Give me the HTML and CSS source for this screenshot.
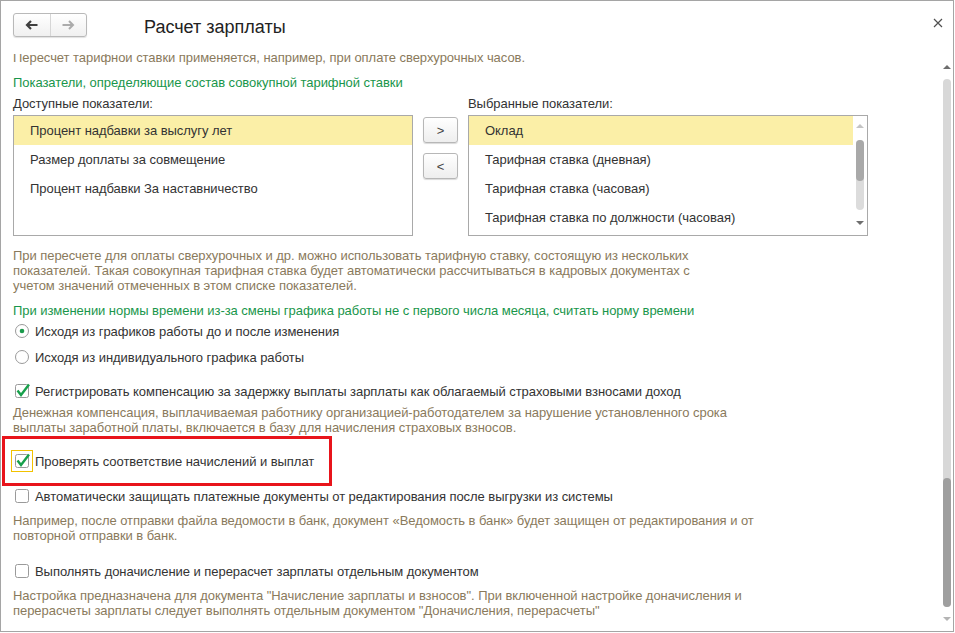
FILE: index.html
```html
<!DOCTYPE html>
<html lang="ru">

<head>
    <meta charset="UTF-8">
    <title>Расчет зарплаты</title>
    <link rel="stylesheet" href="styles.css">
</head>

<body>
    <div class="window">
        <div class="header">
            <div class="nav">
                <span class="nav-btn">
                    <svg width="13" height="10" viewBox="0 0 13 10"><path d="M12.5 5H2M6 1L2 5l4 4" fill="none" stroke="#404040" stroke-width="2.2"/></svg>
                </span>
                <span class="nav-btn">
                    <svg width="13" height="10" viewBox="0 0 13 10"><path d="M0.5 5H11M7 1l4 4-4 4" fill="none" stroke="#ababab" stroke-width="2"/></svg>
                </span>
            </div>
            <h1 class="title">Расчет зарплаты</h1>
            <span class="close">
                <svg width="10" height="10" viewBox="0 0 10 10"><path d="M1 1l8 8M9 1L1 9" stroke="#505050" stroke-width="1.2"/></svg>
            </span>
        </div>

        <div class="body">
            <div class="content">
                <div class="scroll-inner">
                    <div class="hint">Пересчет тарифной ставки применяется, например, при оплате сверхурочных часов.</div>

                    <div class="section-title first">Показатели, определяющие состав совокупной тарифной ставки</div>

                    <div class="lists">
                        <div class="list-label">Доступные показатели:</div>
                        <div></div>
                        <div class="list-label">Выбранные показатели:</div>

                        <div class="list">
                            <div class="list-rows">
                                <div class="list-row current">Процент надбавки за выслугу лет</div>
                                <div class="list-row">Размер доплаты за совмещение</div>
                                <div class="list-row">Процент надбавки За наставничество</div>
                            </div>
                        </div>

                        <div class="move-buttons">
                            <div class="move-btn">&gt;</div>
                            <div class="move-btn">&lt;</div>
                        </div>

                        <div class="list">
                            <div class="list-rows">
                                <div class="list-row current">Оклад</div>
                                <div class="list-row">Тарифная ставка (дневная)</div>
                                <div class="list-row">Тарифная ставка (часовая)</div>
                                <div class="list-row">Тарифная ставка по должности (часовая)</div>
                            </div>
                            <div class="list-scroll">
                                <span class="arrow-up light"></span>
                                <div class="list-track"><div class="list-thumb"></div></div>
                                <span class="arrow-down"></span>
                            </div>
                        </div>
                    </div>

                    <div class="hint after-lists">При пересчете для оплаты сверхурочных и др. можно использовать тарифную ставку, состоящую из нескольких<br>показателей. Такая совокупная тарифная ставка будет автоматически рассчитываться в кадровых документах с<br>учетом значений отмеченных в этом списке показателей.</div>

                    <div class="section-title">При изменении нормы времени из-за смены графика работы не с первого числа месяца, считать норму времени</div>

                    <div class="option radio">
                        <span class="mark">
                            <svg width="16" height="16" viewBox="0 0 16 16"><circle cx="8" cy="8" r="6.5" fill="#fff" stroke="#9a9a9a"/><circle cx="8" cy="8" r="2.3" fill="#1a9a4b"/></svg>
                        </span>
                        <span>Исходя из графиков работы до и после изменения</span>
                    </div>
                    <div class="option radio">
                        <span class="mark">
                            <svg width="16" height="16" viewBox="0 0 16 16"><circle cx="8" cy="8" r="6.5" fill="#fff" stroke="#9a9a9a"/></svg>
                        </span>
                        <span>Исходя из индивидуального графика работы</span>
                    </div>

                    <div class="option opt-compensation">
                        <span class="mark">
                            <svg width="16" height="16" viewBox="0 0 16 16" overflow="visible"><rect x="1.5" y="1.5" width="13" height="13" rx="2" fill="#fff" stroke="#9a9a9a"/><path d="M3.5 7.5L7 12l8-10.5" fill="none" stroke="#17a04b" stroke-width="2.4"/></svg>
                        </span>
                        <span>Регистрировать компенсацию за задержку выплаты зарплаты как облагаемый страховыми взносами доход</span>
                    </div>
                    <div class="hint after-option">Денежная компенсация, выплачиваемая работнику организацией-работодателем за нарушение установленного срока<br>выплаты заработной платы, включается в базу для начисления страховых взносов.</div>

                    <div class="option opt-check">
                        <span class="mark focused">
                            <svg width="16" height="16" viewBox="0 0 16 16" overflow="visible"><rect x="1.5" y="1.5" width="13" height="13" rx="2" fill="#fff" stroke="#9a9a9a"/><path d="M3.5 7.5L7 12l8-10.5" fill="none" stroke="#17a04b" stroke-width="2.4"/></svg>
                        </span>
                        <span>Проверять соответствие начислений и выплат</span>
                        <span class="annotation"></span>
                    </div>

                    <div class="option opt-protect">
                        <span class="mark">
                            <svg width="16" height="16" viewBox="0 0 16 16"><rect x="1.5" y="1.5" width="13" height="13" rx="2" fill="#fff" stroke="#9a9a9a"/></svg>
                        </span>
                        <span>Автоматически защищать платежные документы от редактирования после выгрузки из системы</span>
                    </div>
                    <div class="hint after-option-wide">Например, после отправки файла ведомости в банк, документ «Ведомость в банк» будет защищен от редактирования и от<br>повторной отправки в банк.</div>

                    <div class="option opt-recalc">
                        <span class="mark">
                            <svg width="16" height="16" viewBox="0 0 16 16"><rect x="1.5" y="1.5" width="13" height="13" rx="2" fill="#fff" stroke="#9a9a9a"/></svg>
                        </span>
                        <span>Выполнять доначисление и перерасчет зарплаты отдельным документом</span>
                    </div>
                    <div class="hint after-option-wide">Настройка предназначена для документа "Начисление зарплаты и взносов". При включенной настройке доначисления и<br>перерасчеты зарплаты следует выполнять отдельным документом "Доначисления, перерасчеты"</div>
                </div>
            </div>

            <div class="vscroll">
                <div class="vscroll-btn"><span class="arrow-up"></span></div>
                <div class="vscroll-track"><div class="vscroll-thumb"></div></div>
                <div class="vscroll-btn"><span class="arrow-down light"></span></div>
            </div>
        </div>
    </div>
</body>

</html>
```

FILE: styles.css
```css
body {
    margin: 0;
    font-family: "Liberation Sans", Arial, sans-serif;
    font-size: 13px;
    letter-spacing: -0.05px;
    color: #333;
    background: #fff;
}

.window {
    width: 954px;
    height: 632px;
    box-sizing: border-box;
    border: 1px solid #a5a5a5;
    display: flex;
    flex-direction: column;
    overflow: hidden;
}

/* header */

.header {
    height: 53px;
    flex: none;
    box-sizing: border-box;
    display: flex;
    align-items: flex-start;
    padding: 12px 10px 0 12px;
}

.nav {
    display: flex;
    width: 74px;
    height: 24px;
    box-sizing: border-box;
    border: 1px solid #b9b9b9;
    border-radius: 3px;
    background: linear-gradient(#fff, #f0f0f0);
    box-shadow: 0 1px 1px rgba(0, 0, 0, 0.12);
}

.nav-btn {
    width: 36px;
    display: flex;
    align-items: center;
    justify-content: center;
}

.nav-btn + .nav-btn {
    border-left: 1px solid #d6d6d6;
}

.title {
    margin: 3px 0 0 57px;
    font-size: 18px;
    font-weight: normal;
    line-height: 23px;
    letter-spacing: 0;
    color: #222;
}

.close {
    margin: 5px 0 0 auto;
    display: flex;
}

/* body */

.body {
    flex: 1;
    min-height: 0;
    display: flex;
}

.content {
    flex: 1;
    overflow: hidden;
    padding-left: 12px;
}

.scroll-inner {
    margin-top: -4px;
    white-space: nowrap;
}

.hint {
    line-height: 15px;
    color: #8a7a5c;
}

.section-title {
    margin-top: 10px;
    line-height: 15px;
    color: #19964b;
}

.hint.after-lists {
    margin-top: 12px;
}

.hint.after-option {
    margin-top: 3px;
}

.hint.after-option-wide {
    margin-top: 6px;
}

/* lists */

.lists {
    margin-top: 6px;
    display: grid;
    grid-template-columns: 400px 35px 400px;
    column-gap: 10px;
    row-gap: 4px;
}

.list-label {
    line-height: 15px;
}

.list {
    height: 121px;
    box-sizing: border-box;
    border: 1px solid #a9a9a9;
    display: flex;
    overflow: hidden;
}

.list-rows {
    flex: 1;
}

.list-row {
    height: 29px;
    line-height: 29px;
    padding-left: 16px;
}

.list-row.current {
    background: #fbefa7;
}

.list-scroll {
    width: 14px;
    flex: none;
    display: flex;
    flex-direction: column;
    align-items: center;
    padding-top: 8px;
    box-sizing: border-box;
}

.list-track {
    margin-top: 12px;
    width: 8px;
    height: 70px;
    border-radius: 4px;
    background: #dcdcdc;
}

.list-thumb {
    height: 41px;
    border-radius: 4px;
    background: #a9a9a9;
}

.list-scroll .arrow-down {
    margin-top: 11px;
}

.arrow-up,
.arrow-down {
    width: 0;
    height: 0;
    border-left: 4px solid transparent;
    border-right: 4px solid transparent;
}

.arrow-up {
    border-bottom: 4px solid #6e6e6e;
}

.arrow-down {
    border-top: 4px solid #6e6e6e;
}

.arrow-up.light {
    border-bottom-color: #c4c4c4;
}

.arrow-down.light {
    border-top-color: #b4b4b4;
}

.move-buttons {
    display: flex;
    flex-direction: column;
    gap: 10px;
    padding-top: 2px;
}

.move-btn {
    height: 26px;
    box-sizing: border-box;
    border: 1px solid #b7b7b7;
    border-radius: 3px;
    background: linear-gradient(#fff, #eeeeee);
    box-shadow: 0 1px 1px rgba(0, 0, 0, 0.15);
    display: flex;
    align-items: center;
    justify-content: center;
    color: #444;
}

/* options */

.option {
    display: flex;
    align-items: center;
    height: 22px;
}

.option.radio {
    height: 26px;
}

.mark {
    width: 22px;
    height: 22px;
    flex: none;
    box-sizing: border-box;
    margin: 0 2px 0 -2px;
    display: flex;
    align-items: center;
    justify-content: center;
}

.mark.focused {
    border: 1px solid #f2c200;
}

.opt-compensation {
    margin-top: 10px;
}

.opt-check {
    margin-top: 15px;
    position: relative;
}

.opt-protect {
    margin-top: 13px;
}

.opt-recalc {
    margin-top: 17px;
}

.annotation {
    position: absolute;
    left: -11px;
    top: -14px;
    width: 330px;
    height: 50px;
    box-sizing: border-box;
    border: 3px solid #e8141b;
}

/* window scrollbar */

.vscroll {
    width: 13px;
    flex: none;
    box-sizing: border-box;
    padding: 0 2px 0 3px;
    display: flex;
    flex-direction: column;
}

.vscroll-btn {
    height: 25px;
    display: flex;
    align-items: center;
    justify-content: center;
}

.vscroll-btn:last-child {
    height: 24px;
}

.vscroll-track {
    flex: 1;
    border-radius: 4px;
    background: #d8d8d8;
    display: flex;
    flex-direction: column;
    justify-content: flex-end;
}

.vscroll-thumb {
    height: 129px;
    border-radius: 4px;
    background: #9f9f9f;
}
```
